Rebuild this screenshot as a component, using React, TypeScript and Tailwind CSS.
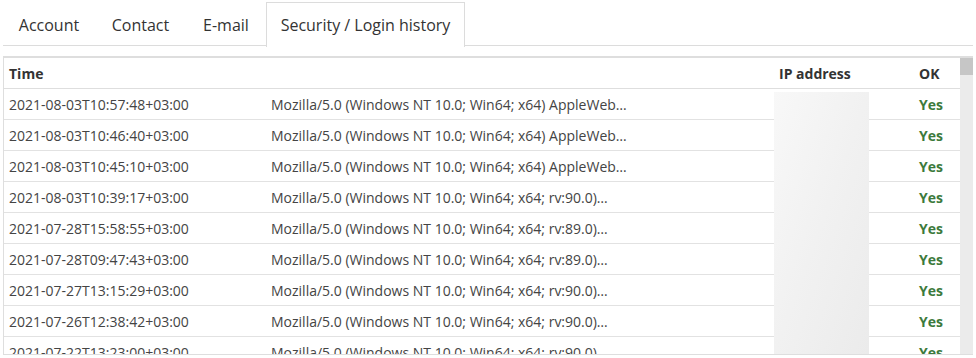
import React from 'react';

const tabs = [
  { label: 'Account', w: 'w-[92px]' },
  { label: 'Contact', w: 'w-[91px]' },
  { label: 'E-mail', w: 'w-[80px]' },
  { label: 'Security / Login history', w: 'w-[199px]' },
];

const AW = 'Mozilla/5.0 (Windows NT 10.0; Win64; x64) AppleWeb…';
const rv = (v: string) => `Mozilla/5.0 (Windows NT 10.0; Win64; x64; rv:${v})…`;

const rows = [
  { time: '2021-08-03T10:57:48+03:00', ua: AW },
  { time: '2021-08-03T10:46:40+03:00', ua: AW },
  { time: '2021-08-03T10:45:10+03:00', ua: AW },
  { time: '2021-08-03T10:39:17+03:00', ua: rv('90.0') },
  { time: '2021-07-28T15:58:55+03:00', ua: rv('89.0') },
  { time: '2021-07-28T09:47:43+03:00', ua: rv('89.0') },
  { time: '2021-07-27T13:15:29+03:00', ua: rv('90.0') },
  { time: '2021-07-26T12:38:42+03:00', ua: rv('90.0') },
  { time: '2021-07-22T13:23:00+03:00', ua: rv('90.0') },
];

const cols = 'grid grid-cols-[261px_508px_140px_1fr]';

export default function App() {
  return (
    <div className="w-[976px] h-[358px] overflow-hidden bg-white text-[#333] font-['Open_Sans',sans-serif]">
      {/* Tabs */}
      <div className="mx-[3px] pt-[2px] flex border-b border-[#dcdcdc] h-[46px]">
        {tabs.map((t, i) => (
          <div
            key={t.label}
            className={`${t.w} h-[44px] flex items-center justify-center whitespace-nowrap text-[16px] border border-b-0 ${
              i === 3 ? 'border-[#dcdcdc] bg-white -mb-px h-[45px]' : 'border-transparent'
            }`}
          >
            {t.label}
          </div>
        ))}
      </div>

      {/* Table */}
      <div className="relative mx-[3px] mt-[10px] h-[299px] border-t-2 border-l border-b border-[#dedede] flex overflow-hidden">
        <div className="flex-1 text-[14px]">
          <div className={`${cols} h-[31px] items-center border-b border-[#dedede] font-bold text-[#333]`}>
            <div className="pl-[5px]">Time</div>
            <div className="pl-[6px]"></div>
            <div className="pl-[6px]">IP address</div>
            <div className="pl-[6px]">OK</div>
          </div>
          {rows.map((r, i) => (
            <div key={i} className={`${cols} h-[31px] items-center border-b border-[#e2e2e2] text-[#444]`}>
              <div className="pl-[5px] whitespace-nowrap">{r.time}</div>
              <div className="pl-[6px] whitespace-nowrap">{r.ua}</div>
              <div className="pl-[6px]"></div>
              <div className="pl-[6px] font-bold text-[#3c7a3c]">Yes</div>
            </div>
          ))}
        </div>

        {/* scrollbar */}
        <div className="w-[13px] bg-[#ebebeb] flex flex-col">
          <div className="h-[17px] bg-[#c6c6c6]" />
        </div>

        {/* blurred IP addresses */}
        <div className="absolute left-[770px] top-[34px] w-[95px] h-[262px] bg-gradient-to-br from-[#f8f8f8] via-[#f1f1f1] to-[#ebebeb]" />
      </div>
    </div>
  );
}
